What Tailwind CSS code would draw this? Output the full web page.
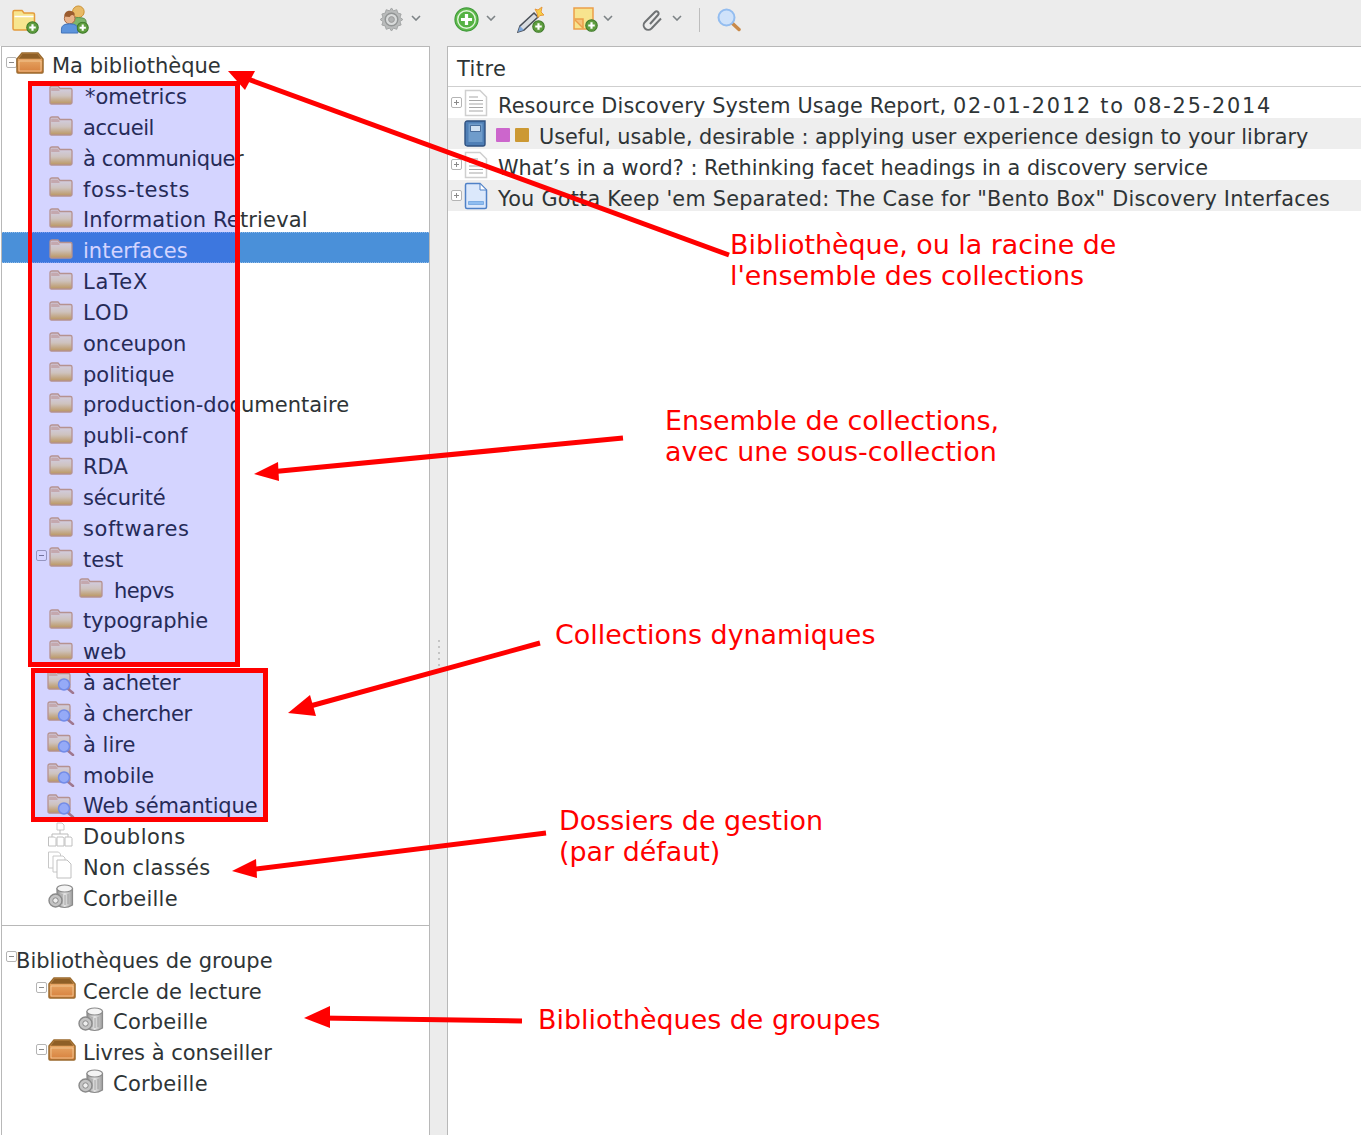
<!DOCTYPE html>
<html lang="fr">
<head>
<meta charset="UTF-8" />
<title>Zotero</title>
<script src="https://cdn.jsdelivr.net/npm/@tailwindcss/browser@4"></script>
</head>
<body class="relative w-[1361px] h-[1135px] overflow-hidden bg-white font-['DejaVu_Sans',sans-serif] text-[#2e3436] text-[21px]">
<svg class="absolute w-0 h-0">
  <defs>
    <linearGradient id="fold" x1="0" y1="0" x2="0" y2="1"><stop offset="0" stop-color="#fffbe8"/><stop offset=".55" stop-color="#f8eab0"/><stop offset="1" stop-color="#e0b440"/></linearGradient>
    <linearGradient id="box" x1="0" y1="0" x2="0" y2="1"><stop offset="0" stop-color="#eeb574"/><stop offset="1" stop-color="#d67f3c"/></linearGradient>
    <linearGradient id="metal" x1="0" y1="0" x2="1" y2="0"><stop offset="0" stop-color="#8f8f8f"/><stop offset=".5" stop-color="#e4e4e4"/><stop offset="1" stop-color="#9c9c9c"/></linearGradient>
    <symbol id="folder" viewBox="0 0 24 20">
      <path d="M1 3Q1 1 3 1H9l2 2.500h10.500q1.500 0 1.500 1.500v12.500q0 1.500-1.500 1.500H2.500Q1 19 1 17.500z" fill="url(#fold)" stroke="#dab07a" stroke-width="1.300"/>
      <path d="M2.200 2.400H8.600l2 2.300v1.300H2.200z" fill="#eccb9e"/>
    </symbol>
    <symbol id="search" viewBox="0 0 28 24">
      <path d="M1 3Q1 1 3 1H9l2 2.500h10.500q1.500 0 1.500 1.500v12.500q0 1.500-1.500 1.500H2.500Q1 19 1 17.500z" fill="url(#fold)" stroke="#dab07a" stroke-width="1.300"/>
      <path d="M2.200 2.400H8.600l2 2.300v1.300H2.200z" fill="#eccb9e"/>
      <path d="M20 18l6 5" stroke="#c09078" stroke-width="2.500" stroke-linecap="round"/>
      <circle cx="17" cy="14.500" r="5.500" fill="#b4cdf6" stroke="#8aa8e2" stroke-width="1.500"/>
    </symbol>
    <symbol id="library" viewBox="0 0 28 22">
      <path d="M1 7L6 1H22L27 7V20Q27 21 26 21H2Q1 21 1 20z" fill="url(#box)" stroke="#9a6a2e" stroke-width="1.500"/>
      <path d="M6.500 1.800H21.500L25.500 6.800H2.500z" fill="#8f5f26"/>
      <path d="M3 9H25V19H3z" fill="none" stroke="#f5cfa0" stroke-width=".8"/>
    </symbol>
    <symbol id="trash" viewBox="0 0 26 25">
      <path d="M9 4.500V21Q16.500 26 24.500 21V4.500z" fill="url(#metal)" stroke="#8a8a8a" stroke-width="1.200"/>
      <ellipse cx="16.700" cy="4.500" rx="7.800" ry="3.500" fill="#f4f4f4" stroke="#8a8a8a" stroke-width="1.200"/>
      <path d="M14 10v10M17 11v10M20 10v10" stroke="#a0a0a0"/>
      <circle cx="7.500" cy="16.500" r="6.500" fill="#c4c4c4" stroke="#8a8a8a" stroke-width="1.400"/>
      <circle cx="7.500" cy="16.500" r="2.700" fill="#eee" stroke="#8a8a8a"/>
    </symbol>
    <symbol id="dupes" viewBox="0 0 26 26">
      <path d="M10 1h5l2 2v5h-7z" fill="#fff" stroke="#c8c8c8"/>
      <path d="M13 8v4M5 15v-3H21v3" fill="none" stroke="#bbb"/>
      <path d="M1.500 15h6l1.500 1.500V24H1.500zM10 15h6l1 1.500V24h-7zM18 15h6l1 1.500V24h-7z" fill="#fff" stroke="#c0c0c0"/>
    </symbol>
    <symbol id="unfiled" viewBox="0 0 26 28">
      <path d="M1.500 1h10l2 2v14h-12z" fill="#fff" stroke="#c8c8c8"/>
      <path d="M6 5h10l2 2v14H6z" fill="#fff" stroke="#c8c8c8"/>
      <path d="M10 9h10l4 4v14H10z" fill="#fff" stroke="#bfbfbf"/>
    </symbol>
    <symbol id="doc" viewBox="0 0 24 28">
      <path d="M1.500 1.500H16L22.500 8V26.500H1.500z" fill="#fff" stroke="#cfcfcf" stroke-width="1.500"/>
      <path d="M5 8h9M5 11.500h14M5 15h14M5 18.500h14M5 22h14" stroke="#a8a8a8" stroke-width="1.200"/>
    </symbol>
    <symbol id="webdoc" viewBox="0 0 24 28">
      <path d="M1.500 3Q1.500 1.500 3 1.500H16L22.500 8V25Q22.500 26.500 21 26.500H3Q1.500 26.500 1.500 25z" fill="#dbe8fb" stroke="#4f81c7" stroke-width="1.500"/>
      <path d="M16 1.500V8H22.500z" fill="#fff" stroke="#4f81c7"/>
      <path d="M4.500 19.500H19.500V22.500H4.500z" fill="#8fbdf0" stroke="#6fa3e0" stroke-width=".8"/>
    </symbol>
    <symbol id="book" viewBox="0 0 22 27">
      <path d="M1 3.500Q1 1 3.500 1H21V24Q21 26 19 26H3.500Q1 26 1 23.500z" fill="#4f7fb6" stroke="#2f5180" stroke-width="1.400"/>
      <path d="M4.500 3.500H18.500V22H4.500z" fill="#6f9ccb"/>
      <path d="M6.500 5.500H16.500V11.500H6.500z" fill="#cfe0f2" stroke="#33598a" stroke-width=".8"/>
    </symbol>
    <symbol id="plusbadge" viewBox="0 0 12 12">
      <circle cx="6" cy="6" r="5.300" fill="#5f9e3f" stroke="#3f7a2a"/>
      <path d="M6 3v6M3 6h6" stroke="#fff" stroke-width="2"/>
    </symbol>
    <symbol id="chev" viewBox="0 0 10 6">
      <path d="M1 1l4 4 4-4" fill="none" stroke="#7d8386" stroke-width="1.600"/>
    </symbol>
    <symbol id="minus" viewBox="0 0 11 11">
      <rect x=".5" y=".5" width="10" height="10" rx="1.500" fill="#fff" stroke="#b4b4b4"/>
      <path d="M3 5.500h5" stroke="#8a8a8a"/>
    </symbol>
    <symbol id="plus" viewBox="0 0 11 11">
      <rect x=".5" y=".5" width="10" height="10" rx="1.500" fill="#fff" stroke="#b4b4b4"/>
      <path d="M3 5.500h5M5.500 3v5" stroke="#8a8a8a"/>
    </symbol>
  </defs>
</svg>

<!-- toolbar -->
<header class="h-[46px] bg-[#ececec] flex items-center pb-[7px]">
  <div class="w-[379px] flex items-center shrink-0">
    <svg class="w-[28px] h-[26px] ml-[11px] mt-[4px]" viewBox="0 0 28 26">
      <path d="M2 3Q2 1.500 3.500 1.500H11l2 2.500h9q1.500 0 1.500 1.500v14q0 1.500-1.500 1.500H3.500Q2 21 2 19.500z" fill="#f7e58f" stroke="#e39b3c" stroke-width="1.500"/>
      <path d="M3.500 7.500H22.500" stroke="#fff" stroke-width="1.500"/>
      <use href="#plusbadge" x="15" y="12" width="13" height="13"/>
    </svg>
    <svg class="w-[29px] h-[29px] ml-[21px]" viewBox="0 0 30 30">
      <circle cx="19" cy="7" r="6" fill="#e8ba66" stroke="#c98d2c"/>
      <path d="M11 26V17q0-4 8-4t8 4v9z" fill="#7db56a" stroke="#5b8f4c"/>
      <circle cx="10" cy="14" r="5.500" fill="#e8b38b" stroke="#a8653c"/>
      <path d="M10 12.500a5 3 0 0 1 5.500-2.500 5.500 5 0 0 0-11 2z" fill="#9a5b2e"/>
      <path d="M1.500 29V25q0-5.500 8.500-5.500t8.500 5.500v4z" fill="#5d94dc" stroke="#3f72b8"/>
      <use href="#plusbadge" x="17" y="17" width="13" height="13"/>
    </svg>
  </div>
  <div class="flex items-center">
    <svg class="w-[25px] h-[27px]" viewBox="0 0 26 26">
      <path d="M13 1l2 3 3.500-1.200 1 3.500 3.500 1-1.200 3.500 3 2.200-3 2.200 1.200 3.500-3.500 1-1 3.500-3.500-1.200-2 3-2-3-3.500 1.200-1-3.500-3.500-1 1.200-3.500-3-2.200 3-2.200L3 7.300l3.500-1 1-3.500L11 4z" fill="#b9bbbb" stroke="#a2a4a4"/>
      <circle cx="13" cy="13" r="6.500" fill="#d9dbdb" stroke="#929595" stroke-width="1.500"/>
      <circle cx="13" cy="13" r="3" fill="#b0b2b2" stroke="#999"/>
    </svg>
    <svg class="w-[10px] h-[6px] ml-[7px] -mt-[3px]"><use href="#chev"/></svg>
    <svg class="w-[25px] h-[25px] ml-[33px]" viewBox="0 0 27 27">
      <circle cx="13.500" cy="13.500" r="12.500" fill="#5fba4c" stroke="#3f9a3a" stroke-width="1.200"/>
      <circle cx="13.500" cy="13.500" r="9.500" fill="#55b243" stroke="#e2f5dc" stroke-width="1.500"/>
      <path d="M13.500 7.500v12M7.500 13.500h12" stroke="#fff" stroke-width="3.500"/>
    </svg>
    <svg class="w-[10px] h-[6px] ml-[7px] -mt-[3px]"><use href="#chev"/></svg>
    <svg class="w-[28px] h-[27px] ml-[21px]" viewBox="0 0 28 27">
      <path d="M1 26l2-6L17 7l4 4L7 24z" fill="#d8dce0" stroke="#4a5058" stroke-width="1.500"/>
      <path d="M1 26l2-6 4 4z" fill="#7fa8dc"/>
      <path d="M18 3l3 1 4-3-1 5 3 3-4 .5-2 2-1-4.500z" fill="#f6cf4a" stroke="#e8983a"/>
      <use href="#plusbadge" x="15" y="14" width="13" height="13"/>
    </svg>
    <svg class="w-[25px] h-[25px] ml-[28px]" viewBox="0 0 25 25">
      <path d="M1 1H20V22H1z" fill="#f7e48e" stroke="#ec9e4a" stroke-width="1.500"/>
      <path d="M1.500 12H10V21.500" fill="#f6c37a" stroke="#ec9e4a" stroke-width="1.500"/>
      <path d="M2 13l8 8" stroke="#ec9e4a" stroke-width="1.500"/>
      <use href="#plusbadge" x="12" y="12" width="13" height="13"/>
    </svg>
    <svg class="w-[10px] h-[6px] ml-[5px] -mt-[3px]"><use href="#chev"/></svg>
    <svg class="w-[21px] h-[24px] ml-[29px]" viewBox="0 0 21 24">
      <path d="M8 16L16 7a2 2 0 0 0-3-3L3 14a4.500 4.500 0 0 0 6.500 6.500L19 10.500" fill="none" stroke="#6f7274" stroke-width="2"/>
    </svg>
    <svg class="w-[10px] h-[6px] ml-[9px] -mt-[3px]"><use href="#chev"/></svg>
    <div class="w-px h-[16px] bg-[#bdbdbd] ml-[17px] box-content py-[4px]"></div>
    <svg class="w-[24px] h-[24px] ml-[17px]" viewBox="0 0 24 24">
      <path d="M14.500 14.500l7.500 7" stroke="#c98a4a" stroke-width="3.500" stroke-linecap="round"/>
      <circle cx="9.500" cy="9.500" r="8" fill="#cfe2fa" stroke="#93bdf0" stroke-width="2"/>
    </svg>
  </div>
</header>

<main class="flex h-[1089px]">
  <!-- left pane -->
  <aside class="ml-px w-[429px] h-full border border-[#b8b8b8] border-b-0 flex flex-col shrink-0">
    <ul class="h-[879px] border-b border-[#b8b8b8]">
      <li class="h-[30.85px] pt-[9px] flex items-center pl-[4px]"><svg class="w-[11px] h-[11px] -mr-px -mt-[9px]"><use href="#minus"/></svg><svg class="w-[28px] h-[22px] mr-[8px] -mt-[8px]"><use href="#library"/></svg>Ma bibliothèque</li>
      <li class="h-[30.85px] pt-[9px] flex items-center pl-[47px]"><svg class="w-[24px] h-[20px] mr-[12px] -mt-[6px]"><use href="#folder"/></svg>*ometrics</li>
      <li class="h-[30.85px] pt-[9px] flex items-center pl-[47px] tracking-[-0.4px]"><svg class="w-[24px] h-[20px] mr-[10px] -mt-[6px]"><use href="#folder"/></svg>accueil</li>
      <li class="h-[30.85px] pt-[9px] flex items-center pl-[47px] tracking-[-0.4px]"><svg class="w-[24px] h-[20px] mr-[10px] -mt-[6px]"><use href="#folder"/></svg>à communiquer</li>
      <li class="h-[30.85px] pt-[9px] flex items-center pl-[47px] tracking-[0.6px]"><svg class="w-[24px] h-[20px] mr-[10px] -mt-[6px]"><use href="#folder"/></svg>foss-tests</li>
      <li class="h-[30.85px] pt-[9px] flex items-center pl-[47px] tracking-[0.15px]"><svg class="w-[24px] h-[20px] mr-[10px] -mt-[6px]"><use href="#folder"/></svg>Information Retrieval</li>
      <li class="h-[30.85px] pt-[9px] flex items-center pl-[47px] bg-[#4a90d9] text-white border-y border-dotted border-white/40"><svg class="w-[24px] h-[20px] mr-[10px] -mt-[6px]"><use href="#folder"/></svg>interfaces</li>
      <li class="h-[30.85px] pt-[9px] flex items-center pl-[47px] tracking-[0.8px]"><svg class="w-[24px] h-[20px] mr-[10px] -mt-[6px]"><use href="#folder"/></svg>LaTeX</li>
      <li class="h-[30.85px] pt-[9px] flex items-center pl-[47px] tracking-[1px]"><svg class="w-[24px] h-[20px] mr-[10px] -mt-[6px]"><use href="#folder"/></svg>LOD</li>
      <li class="h-[30.85px] pt-[9px] flex items-center pl-[47px]"><svg class="w-[24px] h-[20px] mr-[10px] -mt-[6px]"><use href="#folder"/></svg>onceupon</li>
      <li class="h-[30.85px] pt-[9px] flex items-center pl-[47px]"><svg class="w-[24px] h-[20px] mr-[10px] -mt-[6px]"><use href="#folder"/></svg>politique</li>
      <li class="h-[30.85px] pt-[9px] flex items-center pl-[47px]"><svg class="w-[24px] h-[20px] mr-[10px] -mt-[6px]"><use href="#folder"/></svg>production-documentaire</li>
      <li class="h-[30.85px] pt-[9px] flex items-center pl-[47px]"><svg class="w-[24px] h-[20px] mr-[10px] -mt-[6px]"><use href="#folder"/></svg>publi-conf</li>
      <li class="h-[30.85px] pt-[9px] flex items-center pl-[47px]"><svg class="w-[24px] h-[20px] mr-[10px] -mt-[6px]"><use href="#folder"/></svg>RDA</li>
      <li class="h-[30.85px] pt-[9px] flex items-center pl-[47px] tracking-[-0.25px]"><svg class="w-[24px] h-[20px] mr-[10px] -mt-[6px]"><use href="#folder"/></svg>sécurité</li>
      <li class="h-[30.85px] pt-[9px] flex items-center pl-[47px] tracking-[0.6px]"><svg class="w-[24px] h-[20px] mr-[10px] -mt-[6px]"><use href="#folder"/></svg>softwares</li>
      <li class="h-[30.85px] pt-[9px] flex items-center pl-[34px]"><svg class="w-[11px] h-[11px] mr-[2px] -mt-[9px]"><use href="#minus"/></svg><svg class="w-[24px] h-[20px] mr-[10px] -mt-[6px]"><use href="#folder"/></svg>test</li>
      <li class="h-[30.85px] pt-[9px] flex items-center pl-[77px] tracking-[-0.6px]"><svg class="w-[24px] h-[20px] mr-[11px] -mt-[6px]"><use href="#folder"/></svg>hepvs</li>
      <li class="h-[30.85px] pt-[9px] flex items-center pl-[47px] tracking-[-0.2px]"><svg class="w-[24px] h-[20px] mr-[10px] -mt-[6px]"><use href="#folder"/></svg>typographie</li>
      <li class="h-[30.85px] pt-[9px] flex items-center pl-[47px]"><svg class="w-[24px] h-[20px] mr-[10px] -mt-[6px]"><use href="#folder"/></svg>web</li>
      <li class="h-[30.85px] pt-[9px] flex items-center pl-[45px] tracking-[-0.33px]"><svg class="w-[28px] h-[24px] mr-[8px] -mt-[3px]"><use href="#search"/></svg>à acheter</li>
      <li class="h-[30.85px] pt-[9px] flex items-center pl-[45px] tracking-[-0.3px]"><svg class="w-[28px] h-[24px] mr-[8px] -mt-[3px]"><use href="#search"/></svg>à chercher</li>
      <li class="h-[30.85px] pt-[9px] flex items-center pl-[45px]"><svg class="w-[28px] h-[24px] mr-[8px] -mt-[3px]"><use href="#search"/></svg>à lire</li>
      <li class="h-[30.85px] pt-[9px] flex items-center pl-[45px]"><svg class="w-[28px] h-[24px] mr-[8px] -mt-[3px]"><use href="#search"/></svg>mobile</li>
      <li class="h-[30.85px] pt-[9px] flex items-center pl-[45px] tracking-[-0.15px]"><svg class="w-[28px] h-[24px] mr-[8px] -mt-[3px]"><use href="#search"/></svg>Web sémantique</li>
      <li class="h-[30.85px] pt-[9px] flex items-center pl-[45px] tracking-[0.5px]"><svg class="w-[26px] h-[26px] mr-[10px] -mt-[7px]"><use href="#dupes"/></svg>Doublons</li>
      <li class="h-[30.85px] pt-[9px] flex items-center pl-[45px] tracking-[0.27px]"><svg class="w-[26px] h-[28px] mr-[10px] -mt-[8px]"><use href="#unfiled"/></svg>Non classés</li>
      <li class="h-[30.85px] pt-[9px] flex items-center pl-[46px] tracking-[0.22px]"><svg class="w-[26px] h-[25px] mr-[9px] -mt-[7px]"><use href="#trash"/></svg>Corbeille</li>
    </ul>
    <ul class="pt-[15.5px]">
      <li class="h-[30.85px] pt-[9px] flex items-center pl-[4px]"><svg class="w-[11px] h-[11px] -mr-px -mt-[9px]"><use href="#minus"/></svg>Bibliothèques de groupe</li>
      <li class="h-[30.85px] pt-[9px] flex items-center pl-[34px]"><svg class="w-[11px] h-[11px] mr-px -mt-[9px]"><use href="#minus"/></svg><svg class="w-[28px] h-[22px] mr-[7px] -mt-[8px]"><use href="#library"/></svg>Cercle de lecture</li>
      <li class="h-[30.85px] pt-[9px] flex items-center pl-[76px] tracking-[0.22px]"><svg class="w-[26px] h-[25px] mr-[9px] -mt-[7px]"><use href="#trash"/></svg>Corbeille</li>
      <li class="h-[30.85px] pt-[9px] flex items-center pl-[34px]"><svg class="w-[11px] h-[11px] mr-px -mt-[9px]"><use href="#minus"/></svg><svg class="w-[28px] h-[22px] mr-[7px] -mt-[8px]"><use href="#library"/></svg>Livres à conseiller</li>
      <li class="h-[30.85px] pt-[9px] flex items-center pl-[76px] tracking-[0.22px]"><svg class="w-[26px] h-[25px] mr-[9px] -mt-[7px]"><use href="#trash"/></svg>Corbeille</li>
    </ul>
  </aside>

  <!-- splitter -->
  <div class="w-[17px] shrink-0 flex flex-col items-center gap-[4px] pt-[594px] bg-[#ececec]">
    <i class="w-[2px] h-[2px] bg-[#c4c4c4]"></i><i class="w-[2px] h-[2px] bg-[#c4c4c4]"></i><i class="w-[2px] h-[2px] bg-[#c4c4c4]"></i><i class="w-[2px] h-[2px] bg-[#c4c4c4]"></i><i class="w-[2px] h-[2px] bg-[#c4c4c4]"></i>
  </div>

  <!-- right pane -->
  <section class="flex-1 h-full border-l border-t border-[#b8b8b8] text-[20.8px]">
    <div class="h-[40px] pt-[7px] flex items-center pl-[9px] border-b border-[#cfcfcf] text-[21px] tracking-[0.4px]">Titre</div>
    <ul>
      <li class="h-[31px] pt-[8px] flex items-center pl-[3px] whitespace-nowrap"><svg class="w-[11px] h-[11px] mr-[2px] -mt-[8px]"><use href="#plus"/></svg><svg class="w-[24px] h-[28px] mr-[10px] -mt-[8px]"><use href="#doc"/></svg><span class="tracking-[0.15px]">Resource Discovery System Usage Report, <span class="tracking-[1.8px]">02-01-2012 to 08-25-2014</span></span></li>
      <li class="h-[31px] pt-[8px] flex items-center pl-[16px] bg-[#eeeeee] whitespace-nowrap"><svg class="w-[22px] h-[27px] mr-[10px] -mt-[8px]"><use href="#book"/></svg><span class="w-[14px] h-[14px] bg-[#cc66cc] rounded-[1px] mr-[5px] -mt-[6px]"></span><span class="w-[14px] h-[14px] bg-[#cc9933] rounded-[1px] mr-[10px] -mt-[6px]"></span>Useful, usable, desirable : applying user experience design to your library</li>
      <li class="h-[31px] pt-[8px] flex items-center pl-[3px] whitespace-nowrap"><svg class="w-[11px] h-[11px] mr-[2px] -mt-[8px]"><use href="#plus"/></svg><svg class="w-[24px] h-[28px] mr-[10px] -mt-[8px]"><use href="#doc"/></svg>What’s in a word? : Rethinking facet headings in a discovery service</li>
      <li class="h-[31px] pt-[8px] flex items-center pl-[3px] bg-[#eeeeee] whitespace-nowrap"><svg class="w-[11px] h-[11px] mr-[2px] -mt-[8px]"><use href="#plus"/></svg><svg class="w-[24px] h-[28px] mr-[10px] -mt-[8px]"><use href="#webdoc"/></svg><span class="tracking-[0.23px]">You Gotta Keep 'em Separated: The Case for "Bento Box" Discovery Interfaces</span></li>
    </ul>
  </section>
</main>

<!-- annotations over the screenshot -->
<div class="absolute left-[28px] top-[81px] w-[212px] h-[586px] border-[5px] border-l-[4px] border-[#ff0000] bg-[#0000ff]/[0.17]"></div>
<div class="absolute left-[31px] top-[668px] w-[237px] h-[154px] border-[5px] border-l-[4px] border-[#ff0000] bg-[#0000ff]/[0.17]"></div>

<svg class="absolute left-0 top-0 w-[1361px] h-[1135px] pointer-events-none" viewBox="0 0 1361 1135">
  <g stroke="#ff0000" stroke-width="5" fill="none">
    <path d="M729 255L245 78"/>
    <path d="M623 438L270 472"/>
    <path d="M540 643L303 708"/>
    <path d="M546 833L248 870"/>
    <path d="M522 1021L320 1018"/>
  </g>
  <g fill="#ff0000">
    <path d="M228 71L255 71L245 90z"/>
    <path d="M254 474L278 462L279 481z"/>
    <path d="M288 713L310 695L316 716z"/>
    <path d="M232 871L256 859L257 878z"/>
    <path d="M304 1018L330 1006L330 1028z"/>
  </g>
</svg>
<div class="absolute left-[730px] top-[229px] text-[#ff0000] text-[26.9px] leading-[31px] whitespace-nowrap">Bibliothèque, ou la racine de<br>l'ensemble des collections</div>
<div class="absolute left-[665px] top-[405px] text-[#ff0000] text-[26.9px] leading-[31px] whitespace-nowrap">Ensemble de collections,<br>avec une sous-collection</div>
<div class="absolute left-[555px] top-[619px] text-[#ff0000] text-[26.9px] leading-[31px] whitespace-nowrap">Collections dynamiques</div>
<div class="absolute left-[559px] top-[805px] text-[#ff0000] text-[26.9px] leading-[31px] whitespace-nowrap">Dossiers de gestion<br>(par défaut)</div>
<div class="absolute left-[538px] top-[1004px] text-[#ff0000] text-[26.9px] leading-[31px] whitespace-nowrap">Bibliothèques de groupes</div>
</body>
</html>
